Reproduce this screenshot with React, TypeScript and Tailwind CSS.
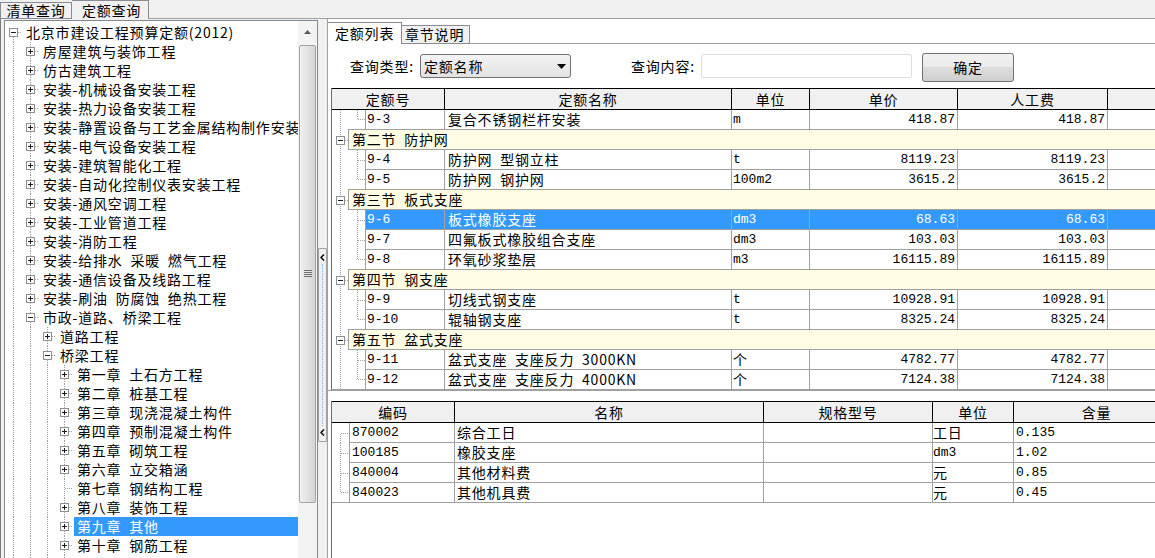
import React from 'react';

const CJK = "font-['Noto_Sans_CJK_SC',sans-serif] text-[14px] tracking-[0.8px]";
const MONO = "font-['Liberation_Mono','Noto_Sans_CJK_SC',monospace] text-[13px] tracking-normal";
const DOT = '#a0a0a0';

const sp = (s: string) => s.replace(/ /g, '\u2002');
const isAscii = (s: string) => /^[\x00-\x7f]*$/.test(s);

type TreeNode = { label: string; level: number; kids?: 'open' | 'closed'; selected?: boolean };

const tree: TreeNode[] = [
  { label: '北京市建设工程预算定额(2012)', level: 0, kids: 'open' },
  { label: '房屋建筑与装饰工程', level: 1, kids: 'closed' },
  { label: '仿古建筑工程', level: 1, kids: 'closed' },
  { label: '安装-机械设备安装工程', level: 1, kids: 'closed' },
  { label: '安装-热力设备安装工程', level: 1, kids: 'closed' },
  { label: '安装-静置设备与工艺金属结构制作安装', level: 1, kids: 'closed' },
  { label: '安装-电气设备安装工程', level: 1, kids: 'closed' },
  { label: '安装-建筑智能化工程', level: 1, kids: 'closed' },
  { label: '安装-自动化控制仪表安装工程', level: 1, kids: 'closed' },
  { label: '安装-通风空调工程', level: 1, kids: 'closed' },
  { label: '安装-工业管道工程', level: 1, kids: 'closed' },
  { label: '安装-消防工程', level: 1, kids: 'closed' },
  { label: '安装-给排水 采暖 燃气工程', level: 1, kids: 'closed' },
  { label: '安装-通信设备及线路工程', level: 1, kids: 'closed' },
  { label: '安装-刷油 防腐蚀 绝热工程', level: 1, kids: 'closed' },
  { label: '市政-道路、桥梁工程', level: 1, kids: 'open' },
  { label: '道路工程', level: 2, kids: 'closed' },
  { label: '桥梁工程', level: 2, kids: 'open' },
  { label: '第一章 土石方工程', level: 3, kids: 'closed' },
  { label: '第二章 桩基工程', level: 3, kids: 'closed' },
  { label: '第三章 现浇混凝土构件', level: 3, kids: 'closed' },
  { label: '第四章 预制混凝土构件', level: 3, kids: 'closed' },
  { label: '第五章 砌筑工程', level: 3, kids: 'closed' },
  { label: '第六章 立交箱涵', level: 3, kids: 'closed' },
  { label: '第七章 钢结构工程', level: 3 },
  { label: '第八章 装饰工程', level: 3, kids: 'closed' },
  { label: '第九章 其他', level: 3, kids: 'closed', selected: true },
  { label: '第十章 钢筋工程', level: 3, kids: 'closed' },
  { label: '第十一章 拆除工程', level: 3, kids: 'closed' },
];

// does the node at `level` (an ancestor or the row itself) have a later sibling?
function hasLater(i: number, level: number) {
  for (let j = i + 1; j < tree.length; j++) {
    if (tree[j].level < level) return false;
    if (tree[j].level === level) return true;
  }
  return true;
}

function Elbow({
  w, h, cx, top, bottom, branch = true, box,
}: { w: number; h: number; cx: number; top?: boolean; bottom?: boolean; branch?: boolean; box?: 'open' | 'closed' }) {
  const cy = Math.floor(h / 2) + 0.5;
  const y1 = top ? 0 : cy;
  const y2 = bottom ? h : cy;
  return (
    <svg width={w} height={h} className="block shrink-0" shapeRendering="crispEdges">
      {(top || bottom) && (
        <line x1={cx} y1={y1} x2={cx} y2={y2} stroke={DOT} strokeDasharray="1 1" />
      )}
      {branch && <line x1={cx} y1={cy} x2={w} y2={cy} stroke={DOT} strokeDasharray="1 1" />}
      {box && (
        <g>
          <rect x={cx - 4} y={cy - 4} width={8} height={8} fill="#fff" stroke="#8e8f8f" />
          <line x1={cx - 2.5} y1={cy} x2={cx + 2.5} y2={cy} stroke="#1c1c1c" />
          {box === 'closed' && <line x1={cx} y1={cy - 2.5} x2={cx} y2={cy + 2.5} stroke="#1c1c1c" />}
        </g>
      )}
    </svg>
  );
}

function TreeRow({ node, index }: { node: TreeNode; index: number }) {
  const guides = [];
  for (let k = 0; k < node.level; k++) {
    const on = hasLater(index, k);
    guides.push(<Elbow key={k} w={17} h={19} cx={8.5} top={on} bottom={on} branch={false} />);
  }
  return (
    <div className="flex h-[19px] items-stretch">
      {guides}
      <Elbow w={17} h={19} cx={8.5} top={node.level > 0} bottom={hasLater(index, node.level)} box={node.kids} />
      <div
        className={`ml-[1px] pl-[3px] flex-1 whitespace-nowrap overflow-hidden leading-[19px] ${
          node.selected ? 'bg-[#3399ff] text-white' : ''
        }`}
      >
        {sp(node.label)}
      </div>
    </div>
  );
}

function ScrollBar() {
  return (
    <div className="w-[19px] shrink-0 bg-[#f3f3f3] flex flex-col items-center">
      <div className="h-[22px] w-full flex items-center justify-center">
        <svg width="7" height="4" viewBox="0 0 7 4">
          <polygon points="3.5,0 7,4 0,4" fill="#5a5a5a" />
        </svg>
      </div>
      <div className="mt-[2px] h-[458px] w-[17px] rounded-[2px] border border-[#a3a3a3] bg-[linear-gradient(90deg,#f1f1f1_0%,#e3e3e3_50%,#d4d4d4_100%)] flex items-center justify-center">
        <svg width="8" height="8" viewBox="0 0 8 8" shapeRendering="crispEdges">
          {[0.5, 2.5, 4.5, 6.5].map((y) => (
            <line key={y} x1="0" y1={y} x2="8" y2={y} stroke="#6f6f6f" />
          ))}
        </svg>
      </div>
    </div>
  );
}

function Chevron() {
  return (
    <svg width="5" height="7" viewBox="0 0 5 7" className="block">
      <polyline points="4,0.5 1,3.5 4,6.5" fill="none" stroke="#000" strokeWidth="1.4" />
    </svg>
  );
}

type URow =
  | { kind: 'group'; label: string }
  | { kind: 'item'; code: string; name: string; unit: string; price: string; labor: string; sel?: boolean };

const upper: URow[] = [
  { kind: 'item', code: '9-3', name: '复合不锈钢栏杆安装', unit: 'm', price: '418.87', labor: '418.87' },
  { kind: 'group', label: '第二节 防护网' },
  { kind: 'item', code: '9-4', name: '防护网 型钢立柱', unit: 't', price: '8119.23', labor: '8119.23' },
  { kind: 'item', code: '9-5', name: '防护网 钢护网', unit: '100m2', price: '3615.2', labor: '3615.2' },
  { kind: 'group', label: '第三节 板式支座' },
  { kind: 'item', code: '9-6', name: '板式橡胶支座', unit: 'dm3', price: '68.63', labor: '68.63', sel: true },
  { kind: 'item', code: '9-7', name: '四氟板式橡胶组合支座', unit: 'dm3', price: '103.03', labor: '103.03' },
  { kind: 'item', code: '9-8', name: '环氧砂浆垫层', unit: 'm3', price: '16115.89', labor: '16115.89' },
  { kind: 'group', label: '第四节 钢支座' },
  { kind: 'item', code: '9-9', name: '切线式钢支座', unit: 't', price: '10928.91', labor: '10928.91' },
  { kind: 'item', code: '9-10', name: '辊轴钢支座', unit: 't', price: '8325.24', labor: '8325.24' },
  { kind: 'group', label: '第五节 盆式支座' },
  { kind: 'item', code: '9-11', name: '盆式支座 支座反力 3000KN', unit: '个', price: '4782.77', labor: '4782.77' },
  { kind: 'item', code: '9-12', name: '盆式支座 支座反力 4000KN', unit: '个', price: '7124.38', labor: '7124.38' },
];

const lower = [
  { code: '870002', name: '综合工日', spec: '', unit: '工日', qty: '0.135' },
  { code: '100185', name: '橡胶支座', spec: '', unit: 'dm3', qty: '1.02' },
  { code: '840004', name: '其他材料费', spec: '', unit: '元', qty: '0.85' },
  { code: '840023', name: '其他机具费', spec: '', unit: '元', qty: '0.45' },
];

const cell = 'h-[20px] shrink-0 border-b border-r border-[#a0a0a0] leading-[19px] whitespace-nowrap overflow-hidden';
const head = 'h-full shrink-0 border-r border-black text-center leading-[20px] bg-[#f0f0f0]';

function UpperTable() {
  return (
    <div className="ml-[3px] h-[302px] shrink-0 border-l border-[#6d6d6d] flex flex-col overflow-hidden">
      <div className="h-[22px] shrink-0 flex border-y border-black bg-[#f0f0f0]">
        <div className={`${head} w-[113px]`}>定额号</div>
        <div className={`${head} w-[287px]`}>定额名称</div>
        <div className={`${head} w-[78px]`}>单位</div>
        <div className={`${head} w-[148px]`}>单价</div>
        <div className={`${head} w-[150px]`}>人工费</div>
        <div className={`${head} w-[200px]`}></div>
      </div>
      {upper.map((r, i) => {
        const last = i === upper.length - 1;
        const next = upper[i + 1];
        if (r.kind === 'group') {
          return (
            <div key={i} className="flex h-[20px] shrink-0">
              <div className="w-[16px] shrink-0">
                <Elbow w={16} h={20} cx={8.5} top bottom box="open" />
              </div>
              <div className="w-[900px] shrink-0 h-[20px] border-l border-b border-[#a0a0a0] bg-[#fffde4] pl-[3px] leading-[19px] whitespace-nowrap">
                {sp(r.label)}
              </div>
            </div>
          );
        }
        const endOfGroup = last || (next && next.kind === 'group');
        const sel = r.sel ? 'bg-[#3399ff] text-white' : '';
        return (
          <div key={i} className="flex h-[20px] shrink-0">
            <div className={`w-[16px] shrink-0 ${last ? 'border-b border-[#a0a0a0]' : ''}`}>
              <Elbow w={16} h={last ? 19 : 20} cx={8.5} top bottom branch={false} />
            </div>
            <div className={`w-[17px] shrink-0 ${endOfGroup ? 'border-b border-[#a0a0a0]' : ''}`}>
              <Elbow w={17} h={endOfGroup ? 19 : 20} cx={9.5} top bottom={!endOfGroup} />
            </div>
            <div className={`${cell} ${sel} w-[80px] border-l pl-[1px] ${MONO}`}>{r.code}</div>
            <div className={`${cell} ${sel} w-[287px] pl-[3px]`}>{sp(r.name)}</div>
            <div className={`${cell} ${sel} w-[78px] pl-[1px] ${isAscii(r.unit) ? MONO : ''}`}>{r.unit}</div>
            <div className={`${cell} ${sel} w-[148px] pr-[2px] text-right ${MONO}`}>{r.price}</div>
            <div className={`${cell} ${sel} w-[150px] pr-[2px] text-right ${MONO}`}>{r.labor}</div>
            <div className={`${cell} ${sel} w-[200px]`}></div>
          </div>
        );
      })}
    </div>
  );
}

function LowerTable() {
  return (
    <div className="ml-[3px] flex-1 border-l border-[#6d6d6d] flex flex-col overflow-hidden">
      <div className="h-[22px] shrink-0 flex border-y border-black bg-[#f0f0f0]">
        <div className={`${head} w-[123px]`}>编码</div>
        <div className={`${head} w-[309px]`}>名称</div>
        <div className={`${head} w-[169px]`}>规格型号</div>
        <div className={`${head} w-[81px]`}>单位</div>
        <div className={`${head} w-[166px]`}>含量</div>
        <div className={`${head} w-[100px]`}></div>
      </div>
      {lower.map((r, i) => {
        const last = i === lower.length - 1;
        return (
          <div key={i} className="flex h-[20px] shrink-0">
            <div className={`w-[17px] shrink-0 ${last ? 'border-b border-[#a0a0a0]' : ''}`}>
              <Elbow w={17} h={last ? 19 : 20} cx={8.5} top={i > 0} bottom={!last} />
            </div>
            <div className={`${cell} w-[106px] border-l pl-[2px] ${MONO}`}>{r.code}</div>
            <div className={`${cell} w-[309px] pl-[2px]`}>{r.name}</div>
            <div className={`${cell} w-[169px] pl-[2px]`}>{r.spec}</div>
            <div className={`${cell} w-[81px] ${isAscii(r.unit) ? MONO : ''}`}>{r.unit}</div>
            <div className={`${cell} w-[166px] pl-[2px] ${MONO}`}>{r.qty}</div>
            <div className={`${cell} w-[100px] border-r-0`}></div>
          </div>
        );
      })}
    </div>
  );
}

export default function App() {
  return (
    <div className={`w-[1155px] h-[558px] overflow-hidden bg-[#f0f0f0] text-black flex flex-col ${CJK}`}>
      {/* outer tabs */}
      <div className="h-[19px] shrink-0 flex items-end">
        <div className="h-[17px] w-[72px] shrink-0 border border-[#898c95] flex items-center justify-center leading-[15px]">
          清单查询
        </div>
        <div className="h-[19px] w-[77px] shrink-0 border-t border-r border-[#898c95] flex items-center justify-center leading-[17px] pl-[3px]">
          定额查询
        </div>
        <div className="flex-1 h-full border-b border-[#a0a0a0]" />
      </div>

      <div className="flex flex-1 min-h-0">
        {/* left tree */}
        <div className="w-[318px] shrink-0 border-l border-[#7a7a7a] pl-[3px] pt-[1px] flex flex-col">
          <div className="h-[560px] shrink-0 border border-[#828790] bg-white flex overflow-hidden">
            <div className="w-[293px] shrink-0 pt-[2px] overflow-hidden">
              {tree.map((n, i) => (
                <TreeRow key={i} node={n} index={i} />
              ))}
            </div>
            <ScrollBar />
          </div>
        </div>

        {/* splitter */}
        <div className="w-[9px] shrink-0 pt-[229px] flex flex-col">
          <div className="h-[194px] w-[9px] border border-[#a0a0a0] rounded-[1px] flex flex-col items-center py-[5px]">
            <Chevron />
            <div className="flex-1 my-[3px] border-l border-dotted border-[#8ab4e0]" />
            <Chevron />
          </div>
        </div>

        {/* right panel */}
        <div className="flex-1 min-w-0 border-l border-[#a0a0a0] bg-white flex flex-col overflow-hidden">
          <div className="h-[25px] shrink-0 flex items-end">
            <div className="h-[22px] w-[74px] shrink-0 border-t border-r border-[#898c95] bg-white pl-[7px] leading-[20px]">
              定额列表
            </div>
            <div className="h-[19px] w-[68px] shrink-0 border-t border-r border-b border-[#898c95] bg-[#f0f0f0] pl-[3px] leading-[17px]">
              章节说明
            </div>
            <div className="flex-1 h-full border-b border-[#a0a0a0]" />
          </div>

          <div className="h-[44px] shrink-0 flex items-center pl-[22px]">
            <div className="w-[70px] shrink-0">查询类型:</div>
            <div className="w-[151px] h-[24px] shrink-0 rounded-[3px] border border-[#707070] bg-[linear-gradient(#f4f4f4,#e2e2e2)] flex items-center justify-between pl-[3px] pr-[4px] leading-[22px]">
              <span>定额名称</span>
              <svg width="9" height="5" viewBox="0 0 9 5">
                <polygon points="0,0 9,0 4.5,5" fill="#000" />
              </svg>
            </div>
            <div className="w-[60px] shrink-0" />
            <div className="w-[70px] shrink-0">查询内容:</div>
            <div className="w-[211px] h-[24px] shrink-0 rounded-[2px] border border-[#dcdcdc] bg-white" />
            <div className="w-[10px] shrink-0" />
            <div className="mt-[2px] w-[92px] h-[29px] shrink-0 rounded-[3px] border border-[#707070] bg-[linear-gradient(#f2f2f2_0%,#ebebeb_50%,#dddddd_50%,#cfcfcf_100%)] flex items-center justify-center leading-[27px]">
              确定
            </div>
          </div>

          <UpperTable />
          <div className="h-[11px] shrink-0 border-t border-[#a0a0a0]" />
          <LowerTable />
        </div>
      </div>
    </div>
  );
}
